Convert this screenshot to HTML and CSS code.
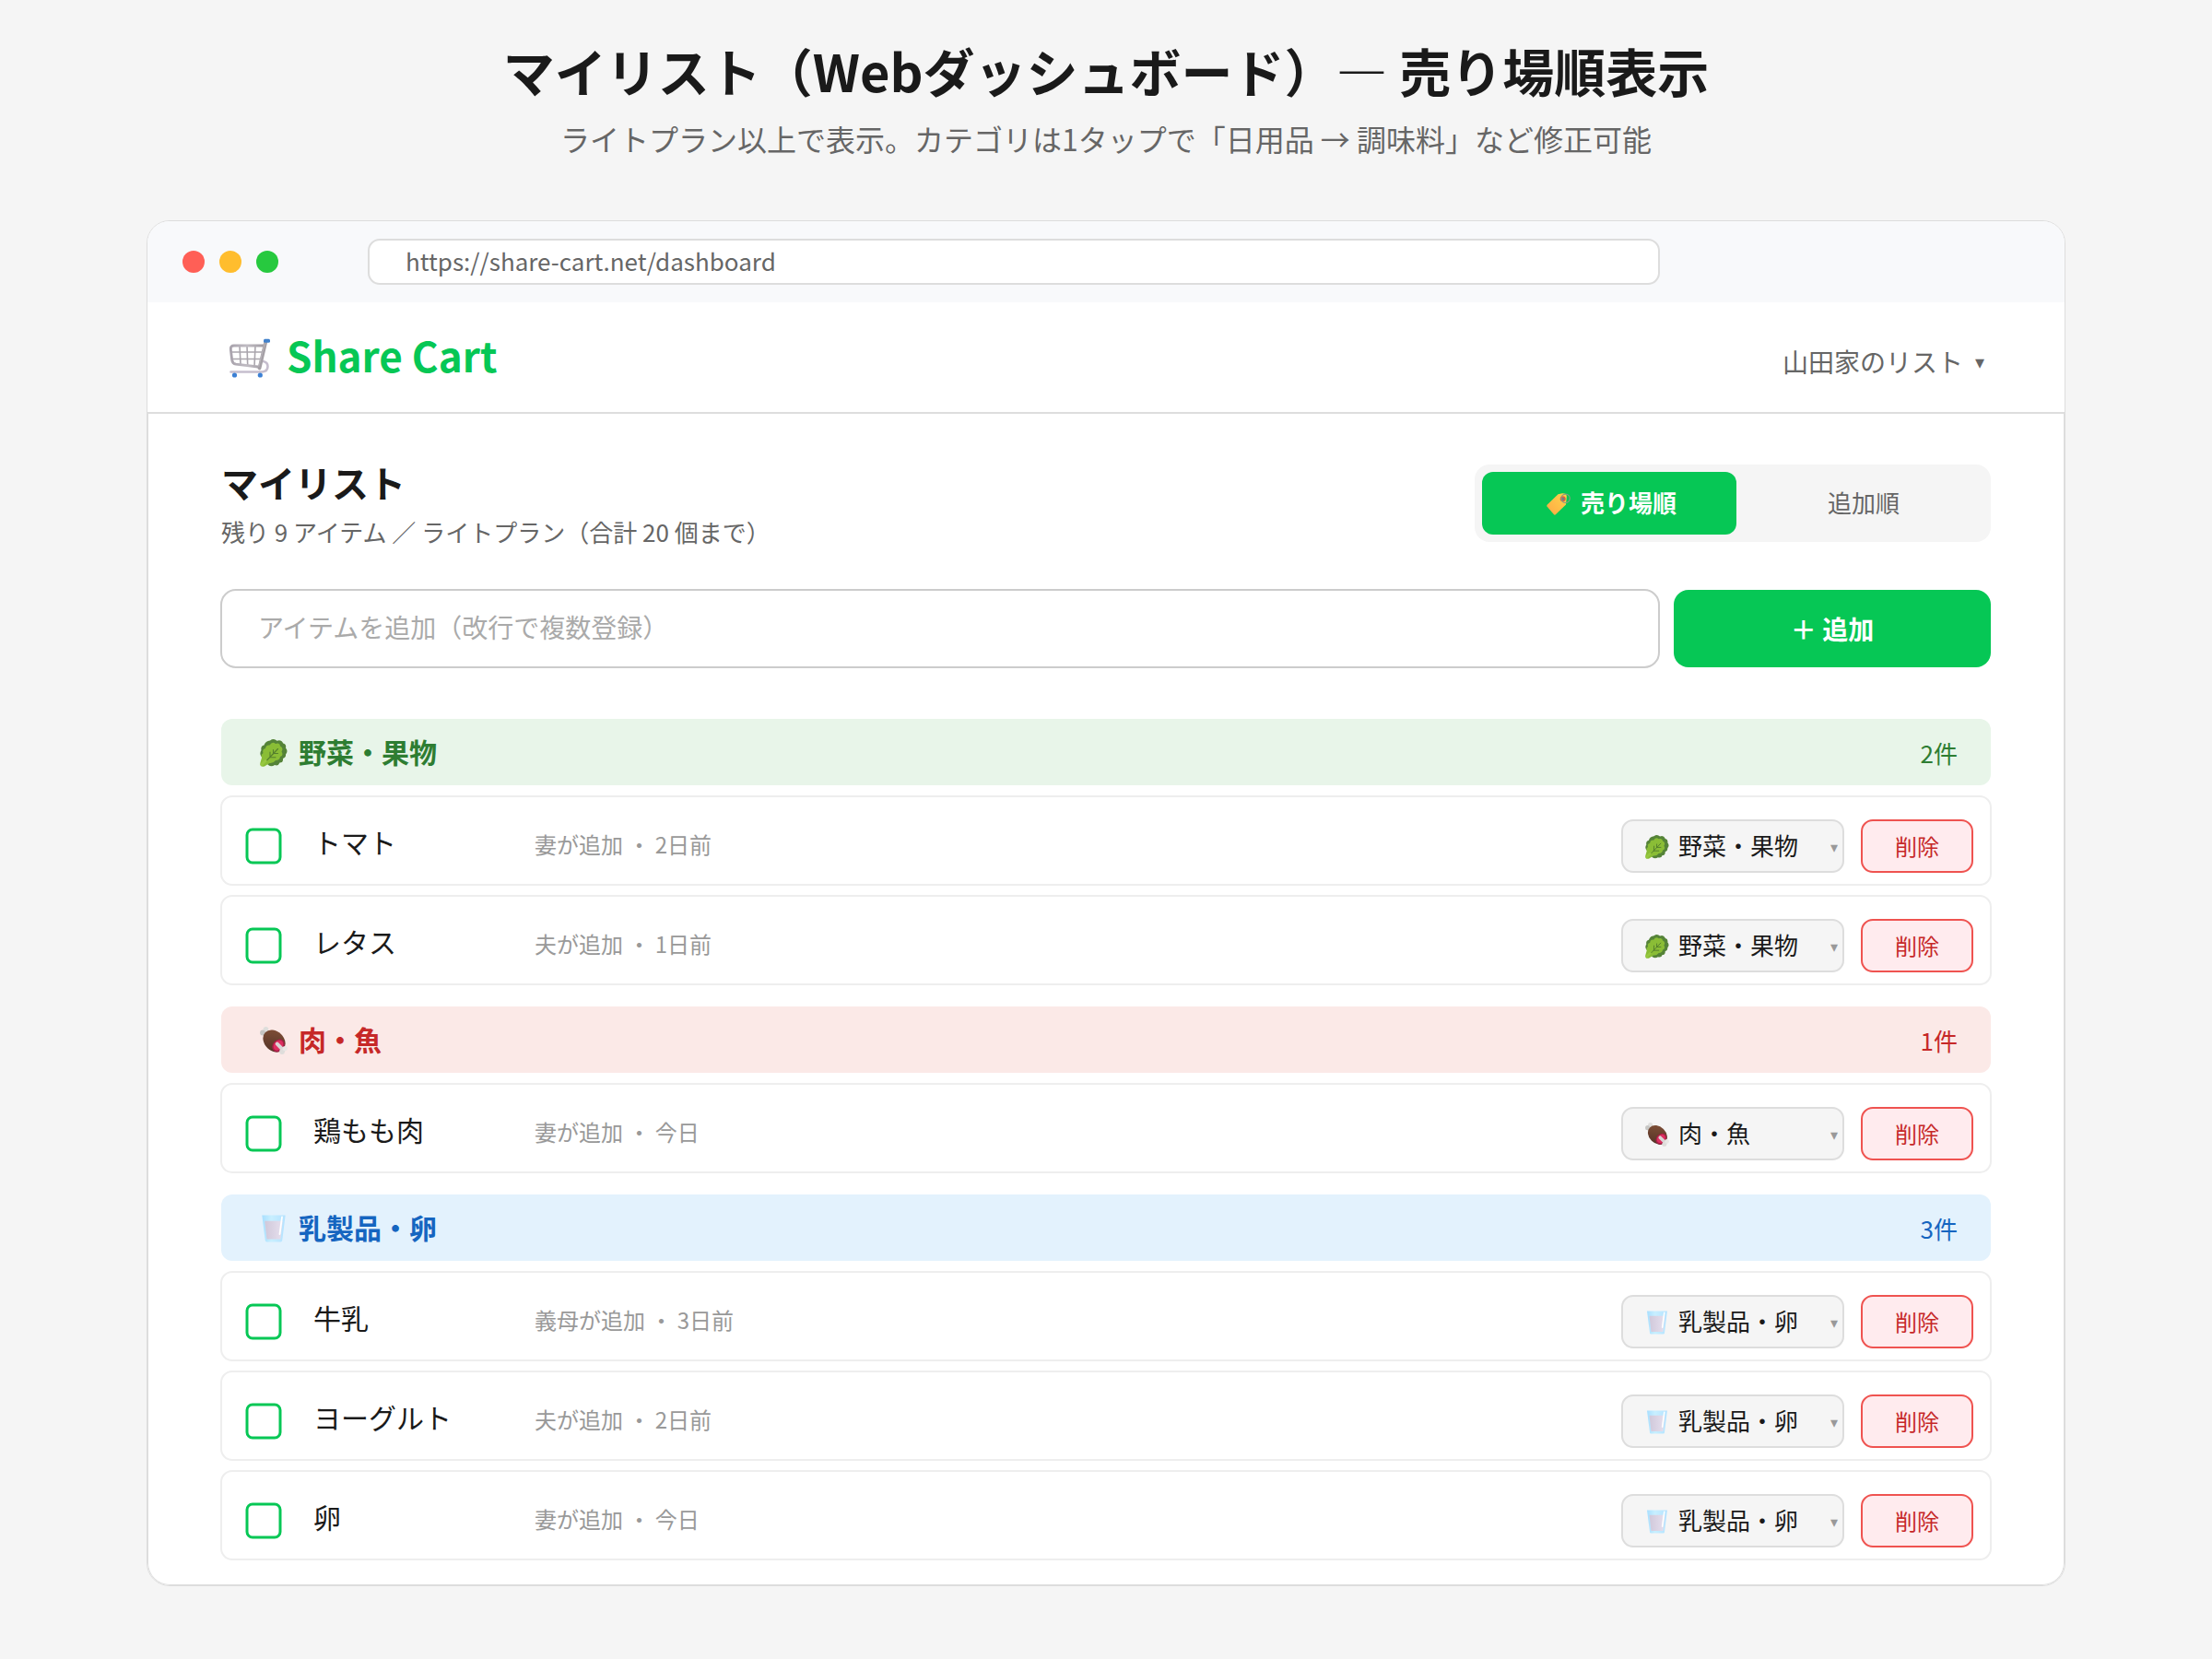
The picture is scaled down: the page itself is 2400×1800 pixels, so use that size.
FILE: index.html
```html
<!DOCTYPE html>
<html lang="ja">
<head>
<meta charset="utf-8">
<title>マイリスト | Share Cart</title>
<link rel="stylesheet" href="styles.css">
</head>
<body>
<svg class="sprite" aria-hidden="true">
  <defs>
    <linearGradient id="cart-steel" x1="0" y1="0" x2="1" y2="0"><stop offset="0" stop-color="#a9a3ad"/><stop offset=".5" stop-color="#c0bcc3"/><stop offset="1" stop-color="#a19ca3"/></linearGradient>
    <linearGradient id="tag-fill" x1="0" y1="1" x2="1" y2="0"><stop offset="0" stop-color="#ffa845"/><stop offset="1" stop-color="#ffd54a"/></linearGradient>
    <linearGradient id="meat-fill" x1="0" y1="0" x2="1" y2="1"><stop offset="0" stop-color="#845238"/><stop offset="1" stop-color="#4e2f25"/></linearGradient>
    <linearGradient id="milk-fill" x1="0" y1="0" x2="1" y2="0"><stop offset="0" stop-color="#d0c8da"/><stop offset="1" stop-color="#e6e0ee"/></linearGradient>
    <linearGradient id="glass-fill" x1="0" y1="0" x2="1" y2="0"><stop offset="0" stop-color="#a8dfff"/><stop offset=".4" stop-color="#c8efff"/><stop offset="1" stop-color="#b4e2ff"/></linearGradient>
  </defs>
  <symbol id="cart" viewBox="0 0 44 44">
    <g fill="none" stroke-linecap="round" stroke-linejoin="round">
      <path d="M11 8l1 20M19 8l.7 21M28 8l-1 23M2 15h34M3 22.5h31" stroke="#aaa6ad" stroke-width="1.6"/>
      <path d="M37 8H5Q1 8 1.300 12l1.400 11.500Q3.200 27.500 7 28.200L31 31" stroke="url(#cart-steel)" stroke-width="2.800"/>
      <path d="M36.500 25q5 1 5 5.500 0 5.500-6 6H1.500" stroke="#c6bece" stroke-width="2.600"/>
      <path d="M39.500 3L32.500 32.500" stroke="#a5a0a6" stroke-width="3.800"/>
      <path d="M38.300 5L31.800 30.500" stroke="#bbb7bc" stroke-width="1"/>
    </g>
    <rect x="37" y=".7" width="7" height="4" rx="1.500" fill="#4282cc"/>
    <circle cx="5.500" cy="40" r="2.600" fill="#3c80d4"/><circle cx="33.300" cy="40" r="2.600" fill="#3c80d4"/>
  </symbol>
  <symbol id="tag" viewBox="0 0 26 26">
    <path d="M.6 13.800L12.500 2.300 17 1.200Q22 1 21.800 5L21 13.500 9.800 24.300q-1 .8-1.800-.1L.5 15.500q-.5-.9.1-1.700z" fill="url(#tag-fill)"/>
    <circle cx="17.700" cy="7.200" r="3" fill="#e2603c"/><circle cx="17.900" cy="7.200" r="1.500" fill="#6d7f8a"/>
    <circle cx="20.600" cy="6.800" r="4.700" fill="none" stroke="#8a9a84" stroke-width="1.100"/>
  </symbol>
  <symbol id="lettuce" viewBox="0 0 30 30">
    <path d="M11 1.500Q15-1.500 18.500 1.800 23 0 25.200 4.500 29 5.500 28 9.500 31 13 28 16.500 28.500 20 25 21 25.500 25.500 21.500 25.500 20 29.500 16 28 12.500 30.500 9 28L1 18Q-.5 15 1.500 12 .5 7.500 4.500 6.500 6 2 11 1.500z" fill="#558338"/>
    <path d="M5 29.500Q0 31 .3 26L2 20Q.5 17 3.500 15 2 11 6 10 6.500 6 10.500 6.500 13.500 2 17 5 21.500 3.500 22 7.500 26 9.500 23.500 13.500 26 17.500 22 19 21.500 23 17 23 14.500 26.500 10.500 26 8.500 27 5 29.500z" fill="#8abd36"/>
    <path d="M7.500 23L19.500 10.500M11 19.500V14M10.500 19.800H17M14.500 15.500V11.500M14.500 15.500H19.500" fill="none" stroke="#557f2d" stroke-width="1.100" stroke-linecap="round"/>
    <path d="M2 27.500L6 23.500" stroke="#97c840" stroke-width="3" stroke-linecap="round"/>
  </symbol>
  <symbol id="meat" viewBox="0 0 30 30">
    <path d="M3 5L8 10" stroke="#d5d5d3" stroke-width="4"/>
    <circle cx="6.500" cy="3" r="2.900" fill="#dededc"/><circle cx="3" cy="6.500" r="2.900" fill="#c6c6c4"/>
    <ellipse cx="15.500" cy="15.500" rx="13.500" ry="10.500" transform="rotate(45 15.500 15.500)" fill="url(#meat-fill)"/>
    <ellipse cx="20" cy="20.500" rx="6" ry="7.500" transform="rotate(42 20 20.500)" fill="#a91f48"/>
    <ellipse cx="20" cy="20.200" rx="4.600" ry="6" transform="rotate(42 20 20.200)" fill="#dd2f60"/>
    <path d="M18.700 18.700L25.500 25.500" stroke="#d9d5d5" stroke-width="4" stroke-linecap="round"/>
    <circle cx="24" cy="27" r="2.900" fill="#dfdddb"/><circle cx="27.200" cy="23.600" r="2.700" fill="#e9e7e5"/>
  </symbol>
  <symbol id="milk" viewBox="0 0 30 30">
    <path d="M2.300.5H27.600L24.200 28q-.2 1.400-1.600 1.400H7.400Q6 29.400 5.800 28z" fill="url(#glass-fill)"/>
    <path d="M5.200 6.700H24.700L22.400 26.500H7.500z" fill="url(#milk-fill)"/>
    <path d="M24 2.500L21.500 21" stroke="#fff" stroke-width="1.800" stroke-linecap="round"/>
  </symbol>
</svg>
<header class="intro">
  <h1 class="intro-title">マイリスト（Webダッシュボード）— 売り場順表示</h1>
  <p class="intro-lead">ライトプラン以上で表示。カテゴリは1タップで「日用品 → 調味料」など修正可能</p>
</header>
<main class="browser">
  <div class="browser-bar">
    <div class="dots"><i class="dot dot-red"></i><i class="dot dot-yellow"></i><i class="dot dot-green"></i></div>
    <div class="url">https://share-cart.net/dashboard</div>
  </div>
  <div class="app-header">
    <div class="logo"><svg class="logo-icon"><use href="#cart"/></svg>Share Cart</div>
    <div class="list-switch">山田家のリスト<span class="switch-caret">▾</span></div>
  </div>
  <div class="app-body">
    <div class="list-head">
      <div>
        <h2 class="list-title">マイリスト</h2>
        <p class="list-summary">残り 9 アイテム ／ ライトプラン（合計 20 個まで）</p>
      </div>
      <div class="sort">
        <div class="sort-option sort-active"><svg class="sort-icon"><use href="#tag"/></svg>売り場順</div>
        <div class="sort-option">追加順</div>
      </div>
    </div>
    <div class="add-row">
      <div class="add-input">アイテムを追加（改行で複数登録）</div>
      <div class="add-button">＋ 追加</div>
    </div>

    <section class="group">
      <div class="group-head veg"><svg class="group-icon"><use href="#lettuce"/></svg><span class="group-name">野菜・果物</span><span class="group-count">2件</span></div>
      <div class="item">
        <svg class="check" viewBox="0 0 40 40"><rect x="2" y="2" width="36" height="36" rx="6"/></svg>
        <span class="name">トマト</span><span class="meta">妻が追加 ・ 2日前</span>
        <span class="select"><svg class="select-icon"><use href="#lettuce"/></svg><span class="select-label">野菜・果物</span><span class="caret">▾</span></span><span class="delete">削除</span>
      </div>
      <div class="item">
        <svg class="check" viewBox="0 0 40 40"><rect x="2" y="2" width="36" height="36" rx="6"/></svg>
        <span class="name">レタス</span><span class="meta">夫が追加 ・ 1日前</span>
        <span class="select"><svg class="select-icon"><use href="#lettuce"/></svg><span class="select-label">野菜・果物</span><span class="caret">▾</span></span><span class="delete">削除</span>
      </div>
    </section>

    <section class="group">
      <div class="group-head meat"><svg class="group-icon"><use href="#meat"/></svg><span class="group-name">肉・魚</span><span class="group-count">1件</span></div>
      <div class="item">
        <svg class="check" viewBox="0 0 40 40"><rect x="2" y="2" width="36" height="36" rx="6"/></svg>
        <span class="name">鶏もも肉</span><span class="meta">妻が追加 ・ 今日</span>
        <span class="select"><svg class="select-icon"><use href="#meat"/></svg><span class="select-label">肉・魚</span><span class="caret">▾</span></span><span class="delete">削除</span>
      </div>
    </section>

    <section class="group">
      <div class="group-head dairy"><svg class="group-icon"><use href="#milk"/></svg><span class="group-name">乳製品・卵</span><span class="group-count">3件</span></div>
      <div class="item">
        <svg class="check" viewBox="0 0 40 40"><rect x="2" y="2" width="36" height="36" rx="6"/></svg>
        <span class="name">牛乳</span><span class="meta">義母が追加 ・ 3日前</span>
        <span class="select"><svg class="select-icon"><use href="#milk"/></svg><span class="select-label">乳製品・卵</span><span class="caret">▾</span></span><span class="delete">削除</span>
      </div>
      <div class="item">
        <svg class="check" viewBox="0 0 40 40"><rect x="2" y="2" width="36" height="36" rx="6"/></svg>
        <span class="name">ヨーグルト</span><span class="meta">夫が追加 ・ 2日前</span>
        <span class="select"><svg class="select-icon"><use href="#milk"/></svg><span class="select-label">乳製品・卵</span><span class="caret">▾</span></span><span class="delete">削除</span>
      </div>
      <div class="item">
        <svg class="check" viewBox="0 0 40 40"><rect x="2" y="2" width="36" height="36" rx="6"/></svg>
        <span class="name">卵</span><span class="meta">妻が追加 ・ 今日</span>
        <span class="select"><svg class="select-icon"><use href="#milk"/></svg><span class="select-label">乳製品・卵</span><span class="caret">▾</span></span><span class="delete">削除</span>
      </div>
    </section>
  </div>
</main>
</body>
</html>
```
FILE: styles.css
```css
* {
  box-sizing: border-box;
  margin: 0;
  padding: 0;
}

body {
  width: 2400px;
  height: 1800px;
  overflow: hidden;
  background: #f5f5f5;
  color: #1a1a1a;
  font-family: "Noto Sans CJK JP", sans-serif;
  white-space: nowrap;
}

.sprite {
  position: absolute;
  width: 0;
  height: 0;
}

.intro {
  height: 239px;
  padding-top: 36px;
  text-align: center;
}

.intro-title {
  font-size: 56px;
  font-weight: 700;
  line-height: 80px;
}

.intro-lead {
  margin-top: 10px;
  color: #666;
  font-size: 32px;
  line-height: 48px;
}

.browser {
  width: 2082px;
  height: 1482px;
  margin: 0 auto;
  overflow: hidden;
  background: #fff;
  border: 1px solid #ddd;
  border-radius: 25px;
}

.browser-bar {
  display: flex;
  height: 88px;
  padding: 19px 0 0 38px;
  background: #f8f9fb;
}

.dots {
  display: flex;
  align-items: center;
  gap: 16px;
  width: 201px;
  height: 50px;
}

.dot {
  width: 24px;
  height: 24px;
  border-radius: 50%;
}

.dot-red {
  background: #ff5f56;
}

.dot-yellow {
  background: #ffbd2e;
}

.dot-green {
  background: #27c93f;
}

.url {
  width: 1402px;
  height: 50px;
  padding-left: 39px;
  background: #fff;
  border: 2px solid #ddd;
  border-radius: 13px;
  color: #666;
  font-size: 26px;
  line-height: 44px;
}

.app-header {
  display: flex;
  justify-content: space-between;
  height: 121px;
  padding: 0 86px 0 89px;
  border-bottom: 2px solid #ddd;
}

.logo {
  display: flex;
  gap: 18px;
  color: #06c755;
  font-size: 44px;
  font-weight: 700;
  line-height: 114px;
}

.logo-icon {
  width: 44px;
  height: 44px;
  margin-top: 39px;
}

.list-switch {
  display: flex;
  gap: 13px;
  color: #666;
  font-size: 28px;
  line-height: 128px;
}

.switch-caret {
  padding-right: 1px;
  font-size: 20px;
  line-height: 127px;
}

.app-body {
  height: 1271px;
  padding: 55px 78px 0;
  border: solid #ddd;
  border-width: 0 1px 1px;
  border-radius: 0 0 24px 24px;
}

.list-head {
  display: flex;
  justify-content: space-between;
  height: 91px;
  margin: 0 1px 44px;
}

.list-title {
  font-size: 40px;
  font-weight: 700;
  line-height: 39px;
}

.list-summary {
  margin-top: 14px;
  color: #666;
  font-size: 26px;
  line-height: 40px;
}

.sort {
  display: flex;
  width: 560px;
  height: 84px;
  padding: 8px 0 8px 8px;
  background: #f5f5f5;
  border-radius: 16px;
}

.sort-option {
  width: 276px;
  border-radius: 12px;
  color: #666;
  font-size: 26px;
  line-height: 66px;
  text-align: center;
}

.sort-active {
  display: flex;
  gap: 11px;
  padding-left: 70px;
  background: #06c755;
  color: #fff;
  font-weight: 700;
}

.sort-icon {
  width: 26px;
  height: 26px;
  margin-top: 22px;
}

.add-row {
  display: flex;
  justify-content: space-between;
  height: 86px;
  margin-bottom: 55px;
}

.add-input {
  width: 1562px;
  padding-left: 39px;
  border: 2px solid #ccc;
  border-radius: 17px;
  color: #aaa;
  font-size: 28px;
  line-height: 79px;
}

.add-button {
  width: 344px;
  margin: 1px;
  background: #06c755;
  border-radius: 16px;
  color: #fff;
  font-size: 28px;
  font-weight: 700;
  line-height: 84px;
  text-align: center;
}

.group {
  display: flex;
  flex-direction: column;
  gap: 10px;
  margin-bottom: 23px;
}

.group-head {
  display: flex;
  gap: 12px;
  height: 72px;
  margin: 0 1px 1px;
  padding: 0 36px 0 42px;
  border-radius: 12px;
}

.group-icon {
  width: 30px;
  height: 30px;
  margin-top: 22px;
}

.group-name {
  flex: 1;
  font-size: 30px;
  font-weight: 700;
  line-height: 70px;
}

.group-count {
  font-size: 26px;
  line-height: 74px;
}

.veg {
  background: #e8f5e9;
  color: #2e7d32;
}

.meat {
  background: #fbe9e7;
  color: #c62828;
}

.dairy {
  background: #e3f2fd;
  color: #1565c0;
}

.item {
  display: flex;
  height: 98px;
  padding: 0 18px 0 25px;
  border: 2px solid #eee;
  border-radius: 13px;
}

.check {
  width: 40px;
  height: 40px;
  margin: 33px 34px 0 0;
  fill: #fff;
  stroke: #06c755;
  stroke-width: 3;
}

.name {
  width: 240px;
  font-size: 30px;
  line-height: 96px;
}

.meta {
  flex: 1;
  color: #999;
  font-size: 24px;
  line-height: 102px;
}

.select {
  display: flex;
  gap: 10px;
  width: 242px;
  height: 58px;
  margin: 24px 18px 0 0;
  padding: 0 5px 0 24px;
  background: #f5f5f5;
  border: 2px solid #ddd;
  border-radius: 13px;
  font-size: 26px;
  line-height: 52px;
}

.select-icon {
  width: 26px;
  height: 26px;
  margin-top: 15px;
}

.select-label {
  flex: 1;
}

.caret {
  color: #999;
  font-size: 16px;
  line-height: 54px;
}

.delete {
  width: 122px;
  height: 58px;
  margin-top: 24px;
  background: #ffebee;
  border: 2px solid #ef5350;
  border-radius: 13px;
  color: #c62828;
  font-size: 24px;
  line-height: 53px;
  text-align: center;
}
```
